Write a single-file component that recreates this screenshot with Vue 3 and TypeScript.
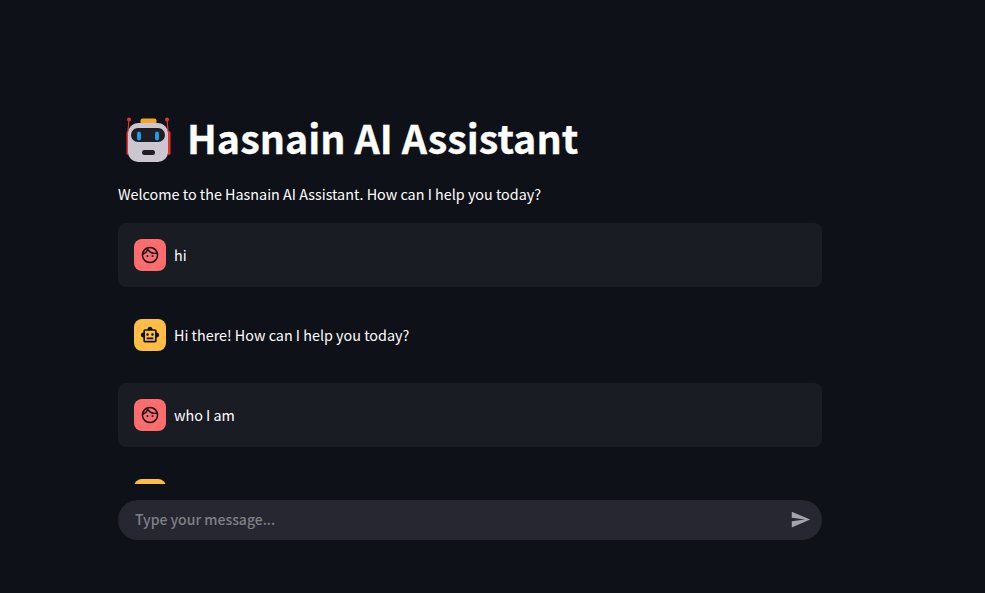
<script setup lang="ts">
interface Message { id: number; role: 'user' | 'bot'; text: string }
const messages: Message[] = [
  { id: 1, role: 'user', text: 'hi' },
  { id: 2, role: 'bot', text: 'Hi there! How can I help you today?' },
  { id: 3, role: 'user', text: 'who I am' },
  { id: 4, role: 'bot', text: '' },
]
const botPath = 'M20 9V7c0-1.1-.9-2-2-2h-3c0-1.66-1.34-3-3-3S9 3.34 9 5H6c-1.1 0-2 .9-2 2v2c-1.66 0-3 1.34-3 3s1.34 3 3 3v4c0 1.1.9 2 2 2h12c1.1 0 2-.9 2-2v-4c1.66 0 3-1.34 3-3s-1.34-3-3-3zm-2 10H6V7h12v12zm-9-6c-.83 0-1.5-.67-1.5-1.5S8.17 10 9 10s1.5.67 1.5 1.5S9.83 13 9 13zm7.5-1.5c0 .83-.67 1.5-1.5 1.5s-1.5-.67-1.5-1.5.67-1.5 1.5-1.5 1.5.67 1.5 1.5zM8 15h8v2H8v-2z'
</script>

<template>
  <div class="page">
    <h1 class="title">
      <svg class="robot" viewBox="0 0 47 47" aria-hidden="true">
        <path d="M4 3 L2.6 20M42 3 L43.4 20" stroke="#e8332c" stroke-width="1.2" fill="none" />
        <circle cx="4" cy="3.5" r="2" fill="#e8332c" />
        <circle cx="42" cy="3.5" r="2" fill="#e8332c" />
        <rect x="1.5" y="15" width="3.5" height="24" rx="1.75" fill="#e8332c" />
        <rect x="42" y="15" width="3.5" height="24" rx="1.75" fill="#e8332c" />
        <rect x="15.5" y="2.5" width="16" height="7" rx="2" fill="#f5a623" />
        <rect x="3" y="7" width="40" height="39" rx="10" fill="#ccc6d1" />
        <rect x="6" y="12" width="34" height="14" rx="7" fill="#1f1d24" />
        <rect x="12" y="15.5" width="4" height="9" rx="2" fill="#1c9be8" />
        <rect x="30" y="15.5" width="4" height="9" rx="2" fill="#1c9be8" />
        <rect x="17" y="34" width="13" height="5" rx="2.5" fill="#1f1d24" />
      </svg>
      <span>Hasnain AI Assistant</span>
    </h1>
    <p class="welcome">Welcome to the Hasnain AI Assistant. How can I help you today?</p>
    <div class="chat">
      <div v-for="m in messages" :key="m.id" class="message" :class="{ shaded: m.role === 'user' }">
        <div class="avatar" :class="m.role">
          <svg v-if="m.role === 'user'" viewBox="0 0 24 24" width="20" height="20" aria-hidden="true">
            <circle cx="12" cy="12" r="9.1" fill="none" stroke="#0e1117" stroke-width="1.8" />
            <path d="M3.4 11C6.2 10 8.4 8 9.4 5.4C11.4 8.4 14.4 10 17.4 10C18.6 10 19.6 9.9 20.6 9.4" fill="none" stroke="#0e1117" stroke-width="1.7" />
            <circle cx="9" cy="13.2" r="1.25" fill="#0e1117" />
            <circle cx="15" cy="13.2" r="1.25" fill="#0e1117" />
          </svg>
          <svg v-else viewBox="0 0 24 24" width="20" height="20" aria-hidden="true">
            <path :d="botPath" fill="#0e1117" />
          </svg>
        </div>
        <div class="text">{{ m.text }}</div>
      </div>
    </div>
    <div class="composer">
      <span class="placeholder">Type your message...</span>
      <svg class="send" viewBox="0 0 24 24" width="21" height="21" aria-hidden="true">
        <path d="M2.01 21L23 12 2.01 3 2 10l15 2-15 2z" fill="#a3a3ad" />
      </svg>
    </div>
  </div>
</template>

<style>
html, body { margin: 0; background: #0e1117; }
</style>

<style scoped>
.page {
  box-sizing: border-box;
  height: 593px;
  overflow: hidden;
  padding: 112px 163px 0 118px;
  background: #0e1117;
  color: #fff;
  font-family: "Noto Sans CJK SC", "Noto Sans", sans-serif;
  font-size: 14.35px;
  display: flex;
  flex-direction: column;
}
.title {
  display: flex;
  align-items: center;
  gap: 15px;
  margin: 0;
  height: 54px;
  padding-left: 7px;
  font-size: 39.45px;
  line-height: 54px;
  font-weight: 700;
  color: #fff;
  -webkit-text-stroke: 0.3px #fff;
}
.title span { padding-bottom: 4px; }
.robot { width: 47px; height: 47px; flex: none; }
.welcome {
  margin: 15px 0 0;
  height: 26px;
  line-height: 26px;
}
.chat {
  margin-top: 16px;
  height: 261px;
  overflow: hidden;
  display: flex;
  flex-direction: column;
  gap: 16px;
}
.message {
  flex: none;
  display: flex;
  align-items: center;
  gap: 8px;
  padding: 16px;
  height: 64px;
  box-sizing: border-box;
  border-radius: 8px;
}
.message.shaded { background: #1a1c24; }
.avatar {
  flex: none;
  width: 32px;
  height: 32px;
  border-radius: 8px;
  display: flex;
  align-items: center;
  justify-content: center;
}
.avatar.user { background: #ff6c6c; }
.avatar.bot { background: #ffbd45; }
.text { line-height: 26px; }
.composer {
  margin-top: 16px;
  height: 40px;
  flex: none;
  border-radius: 20px;
  background: #262730;
  display: flex;
  align-items: center;
  justify-content: space-between;
  padding: 0 11px 0 17px;
}
.placeholder { color: #7f8087; line-height: 26px; font-weight: 500; font-size: 14px; padding-bottom: 2px; }
.send { margin-top: -2px; }
</style>
